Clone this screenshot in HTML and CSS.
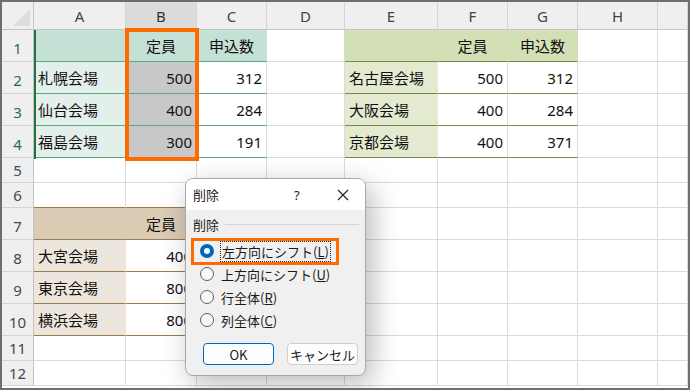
FILE: index.html
```html
<!DOCTYPE html>
<html lang="ja">
<head>
    <meta charset="UTF-8">
    <title>削除</title>
    <link rel="stylesheet" href="styles.css">
</head>
<body>
    <div class="sheet">
        <div class="row hdr">
            <div class="h corner"></div>
            <div class="ch">A</div>
            <div class="ch on">B</div>
            <div class="ch">C</div>
            <div class="ch">D</div>
            <div class="ch">E</div>
            <div class="ch">F</div>
            <div class="ch">G</div>
            <div class="ch">H</div>
            <div class="ch"></div>
        </div>

        <div class="row tall">
            <div class="h on">1</div>
            <div class="c t1h"></div>
            <div class="c t1h mid">定員</div>
            <div class="c t1h mid">申込数</div>
            <div class="c"></div>
            <div class="c t2h"></div>
            <div class="c t2h mid">定員</div>
            <div class="c t2h mid">申込数</div>
            <div class="c"></div>
            <div class="c"></div>
        </div>
        <div class="row tall">
            <div class="h on">2</div>
            <div class="c t1a">札幌会場</div>
            <div class="c t1s num">500</div>
            <div class="c t1 num">312</div>
            <div class="c"></div>
            <div class="c t2a">名古屋会場</div>
            <div class="c t2 num">500</div>
            <div class="c t2 num">312</div>
            <div class="c"></div>
            <div class="c"></div>
        </div>
        <div class="row tall">
            <div class="h on">3</div>
            <div class="c t1a">仙台会場</div>
            <div class="c t1s num">400</div>
            <div class="c t1 num">284</div>
            <div class="c"></div>
            <div class="c t2a">大阪会場</div>
            <div class="c t2 num">400</div>
            <div class="c t2 num">284</div>
            <div class="c"></div>
            <div class="c"></div>
        </div>
        <div class="row tall">
            <div class="h on">4</div>
            <div class="c t1a">福島会場</div>
            <div class="c t1s num">300</div>
            <div class="c t1 num">191</div>
            <div class="c"></div>
            <div class="c t2a">京都会場</div>
            <div class="c t2 num">400</div>
            <div class="c t2 num">371</div>
            <div class="c"></div>
            <div class="c"></div>
        </div>
        <div class="row short">
            <div class="h">5</div>
            <div class="c"></div><div class="c"></div><div class="c"></div><div class="c"></div>
            <div class="c"></div><div class="c"></div><div class="c"></div><div class="c"></div><div class="c"></div>
        </div>
        <div class="row short">
            <div class="h">6</div>
            <div class="c t3top"></div><div class="c t3top"></div><div class="c"></div><div class="c"></div>
            <div class="c"></div><div class="c"></div><div class="c"></div><div class="c"></div><div class="c"></div>
        </div>
        <div class="row tall">
            <div class="h">7</div>
            <div class="c t3h"></div>
            <div class="c t3h mid">定員</div>
            <div class="c"></div><div class="c"></div>
            <div class="c"></div><div class="c"></div><div class="c"></div><div class="c"></div><div class="c"></div>
        </div>
        <div class="row tall">
            <div class="h">8</div>
            <div class="c t3a">大宮会場</div>
            <div class="c t3 num">400</div>
            <div class="c"></div><div class="c"></div>
            <div class="c"></div><div class="c"></div><div class="c"></div><div class="c"></div><div class="c"></div>
        </div>
        <div class="row tall">
            <div class="h">9</div>
            <div class="c t3a">東京会場</div>
            <div class="c t3 num">800</div>
            <div class="c"></div><div class="c"></div>
            <div class="c"></div><div class="c"></div><div class="c"></div><div class="c"></div><div class="c"></div>
        </div>
        <div class="row tall">
            <div class="h">10</div>
            <div class="c t3a">横浜会場</div>
            <div class="c t3 num">800</div>
            <div class="c"></div><div class="c"></div>
            <div class="c"></div><div class="c"></div><div class="c"></div><div class="c"></div><div class="c"></div>
        </div>
        <div class="row short">
            <div class="h">11</div>
            <div class="c"></div><div class="c"></div><div class="c"></div><div class="c"></div>
            <div class="c"></div><div class="c"></div><div class="c"></div><div class="c"></div><div class="c"></div>
        </div>
        <div class="row short">
            <div class="h">12</div>
            <div class="c"></div><div class="c"></div><div class="c"></div><div class="c"></div>
            <div class="c"></div><div class="c"></div><div class="c"></div><div class="c"></div><div class="c"></div>
        </div>

        <div class="row-mark"></div>
        <div class="mark"></div>

        <div class="dialog">
            <div class="dlg-title">
                <span class="dlg-name">削除</span>
                <span class="dlg-help">?</span>
                <svg class="dlg-close" width="12" height="12" viewBox="0 0 12 12">
                    <path d="M1 1L11 11M11 1L1 11" stroke="#222" stroke-width="1.1" fill="none"/>
                </svg>
            </div>
            <div class="dlg-body">
                <div class="group">
                    <span>削除</span>
                    <span class="group-line"></span>
                </div>
                <div class="opts">
                    <div class="opt"><span class="radio checked"></span><span class="focus">左方向にシフト(<u>L</u>)</span></div>
                    <div class="opt"><span class="radio"></span><span>上方向にシフト(<u>U</u>)</span></div>
                    <div class="opt"><span class="radio"></span><span>行全体(<u>R</u>)</span></div>
                    <div class="opt"><span class="radio"></span><span>列全体(<u>C</u>)</span></div>
                </div>
                <div class="btns">
                    <button class="btn default">OK</button>
                    <button class="btn">キャンセル</button>
                </div>
            </div>
            <div class="opt-mark"></div>
        </div>
    </div>
</body>
</html>
```

FILE: styles.css
```css
* {
    margin: 0;
    padding: 0;
    box-sizing: border-box;
}

body {
    width: 690px;
    height: 390px;
    overflow: hidden;
    background: #fff;
    font-family: 'Noto Sans', 'Noto Sans CJK JP', sans-serif;
    color: #111;
}

.sheet {
    position: relative;
    width: 690px;
    height: 390px;
    border: 2px solid #6e6e6e;
    overflow: hidden;
}

.row {
    display: grid;
    grid-template-columns: 32px 92px 71px 70px 78px 93px 70px 70px 80px 1fr;
}

.row.hdr { height: 28px; }
.row.tall { height: 32px; }
.row.short { height: 25px; }

/* headers */
.ch {
    background: #efefef;
    border-right: 1px solid #d4d4d4;
    border-bottom: 1px solid #c4c4c4;
    display: flex;
    align-items: center;
    justify-content: center;
    font-size: 15px;
    color: #444;
}

.ch.on {
    background: #dcdcdc;
    color: #333;
}

.h {
    background: #efefef;
    border-right: 1px solid #c4c4c4;
    border-bottom: 1px solid #d4d4d4;
    display: flex;
    align-items: flex-end;
    justify-content: center;
    padding-bottom: 3px;
    font-size: 15px;
    color: #3d4a55;
}

.row.short .h {
    align-items: center;
    padding-bottom: 0;
}

.h.on {
    color: #2c6a55;
}

.h.corner {
    position: relative;
    border-bottom-color: #c4c4c4;
}

.h.corner::after {
    content: '';
    position: absolute;
    right: 3px;
    bottom: 3px;
    border-style: solid;
    border-width: 0 0 17px 17px;
    border-color: transparent transparent #dedede transparent;
}

/* cells */
.c {
    border-right: 1px solid #dadada;
    border-bottom: 1px solid #dadada;
    display: flex;
    align-items: center;
    padding: 0 4px;
    font-size: 15px;
    white-space: nowrap;
    overflow: hidden;
}

.c.num {
    justify-content: flex-end;
}

.c.mid {
    justify-content: center;
}

/* table 1 : teal */
.t1h { background: #c5e0d5; border-right-color: #c5e0d5; border-bottom-color: #5aa985; }
.t1a { background: #e2efea; border-right-color: #e2efea; border-bottom-color: #5aa985; }
.t1s { background: #c8c8c8; border-right-color: #c8c8c8; border-bottom-color: #5aa985; }
.t1 { border-bottom-color: #5aa985; }

/* table 2 : olive */
.t2h { background: #d3dfb4; border-right-color: #d3dfb4; border-bottom-color: #76884a; }
.t2a { background: #e3ead0; border-right-color: #e3ead0; border-bottom-color: #76884a; }
.t2 { border-bottom-color: #76884a; }

/* table 3 : tan */
.t3top { border-bottom-color: #9a7a4f; }
.t3h { background: #d9cbb4; border-right-color: #d9cbb4; border-bottom-color: #9a7a4f; }
.t3a { background: #ede6dc; border-right-color: #ede6dc; border-bottom-color: #9a7a4f; }
.t3 { border-bottom-color: #9a7a4f; }

/* selection marks */
.row-mark {
    position: absolute;
    left: 32px;
    top: 28px;
    width: 2px;
    height: 129px;
    background: #217346;
}

.mark {
    position: absolute;
    left: 123px;
    top: 26px;
    width: 74px;
    height: 133px;
    border: 4px solid #ff6a00;
}

/* dialog */
.dialog {
    position: absolute;
    left: 183px;
    top: 176px;
    width: 181px;
    height: 198px;
    background: #f0f0f0;
    border: 1px solid #a8a8a8;
    border-radius: 8px;
    overflow: hidden;
    box-shadow: 6px 8px 28px rgba(0, 0, 0, 0.28);
    font-family: 'Noto Sans CJK JP', sans-serif;
    font-size: 13px;
    color: #1a1a1a;
}

.dlg-title {
    height: 31px;
    background: #fff;
    display: flex;
    align-items: center;
    padding: 0 0 0 7px;
}

.dlg-name {
    flex: 1;
}

.dlg-help {
    width: 20px;
    font-family: 'Noto Sans', sans-serif;
    font-size: 13px;
    margin-right: 23px;
}

.dlg-close {
    margin-right: 16px;
}

.dlg-body {
    padding: 6px 6px 0 7px;
}

.group {
    display: flex;
    align-items: center;
    gap: 6px;
    height: 16px;
}

.group-line {
    flex: 1;
    height: 1px;
    background: #d4d4d4;
}

.opts {
    margin-top: 10px;
    display: flex;
    flex-direction: column;
    gap: 5px;
}

.opt {
    display: flex;
    align-items: center;
    gap: 7px;
    height: 18px;
    padding-left: 7px;
}

.opt u {
    text-decoration: underline;
}

.radio {
    width: 14px;
    height: 14px;
    border: 1px solid #606060;
    border-radius: 50%;
    background: #f8f8f8;
}

.radio.checked {
    border: 4px solid #0067c0;
    background: #fff;
}

.focus {
    outline: 1px dotted #222;
    outline-offset: 0;
    padding: 0 1px;
}

.btns {
    display: flex;
    gap: 13px;
    margin-top: 14px;
    padding-left: 10px;
}

.btn {
    width: 71px;
    height: 22px;
    border: 1px solid #cfcfcf;
    border-radius: 4px;
    background: #fdfdfd;
    font-family: 'Noto Sans CJK JP', sans-serif;
    font-size: 13px;
    color: #1a1a1a;
}

.btn.default {
    border-color: #0067c0;
}

.opt-mark {
    position: absolute;
    left: 5px;
    top: 59px;
    width: 148px;
    height: 27px;
    border: 3px solid #ff6a00;
}
```
